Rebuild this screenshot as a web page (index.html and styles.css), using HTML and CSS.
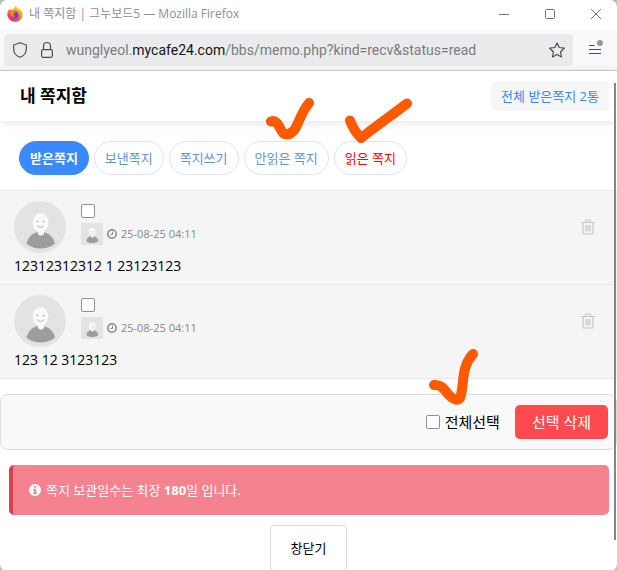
FILE: index.html
```html
<!DOCTYPE html>
<html lang="ko">
<head>
<meta charset="utf-8">
<meta name="viewport" content="width=device-width, initial-scale=1">
<title>내 쪽지함 | 그누보드5</title>
<link rel="stylesheet" href="styles.css">
</head>
<body>
<svg class="symbols" aria-hidden="true">
  <symbol id="person" viewBox="0 0 52 52">
    <rect width="52" height="52" fill="#e3e3e3"/>
    <path d="M12.500 42.500C15 34 20 31 26.500 31S38.500 34 41 42.500C37 46 32 47.500 26.500 47.500S16 46 12.500 42.500Z" fill="#9d9d9d"/>
    <path d="M24 29h6v4q-3 3-6 0Z" fill="#fafafa"/>
    <ellipse cx="26.500" cy="21.500" rx="7.800" ry="9.500" fill="#fafafa"/>
    <circle cx="23.500" cy="20.500" r=".8" fill="#999"/>
    <circle cx="29.500" cy="20.500" r=".8" fill="#999"/>
    <path d="M23 24.500q3.500 4 7 0" fill="none" stroke="#aaa"/>
  </symbol>
  <symbol id="clock" viewBox="0 0 10 10">
    <circle cx="5" cy="5" r="4.200" fill="none" stroke="currentColor" stroke-width="1.500"/>
    <path d="M5.500 2.500v3h-2" fill="none" stroke="currentColor"/>
  </symbol>
  <symbol id="trash" viewBox="0 0 14 16">
    <path d="M0 3.500h14M4 3.500L5 1h4l1 2.500M2 3.500v10.500q0 1 1 1h8q1 0 1-1V3.500M5 6v6.500M7 6v6.500M9 6v6.500" fill="none" stroke="currentColor" stroke-width="1.200"/>
  </symbol>
</svg>
<div class="window">
  <div class="titlebar">
    <svg class="firefox" viewBox="0 0 16 16" aria-hidden="true">
      <defs>
        <linearGradient id="flame" x1=".8" y1="0" x2=".25" y2="1">
          <stop offset="0" stop-color="#ffe226"/>
          <stop offset=".4" stop-color="#ff9a1f"/>
          <stop offset=".7" stop-color="#ff4b3e"/>
          <stop offset="1" stop-color="#e5218a"/>
        </linearGradient>
      </defs>
      <path d="M8.500 0C10 1 11 2.500 11.500 3.500L12.200 2.600C14.500 4.500 15.700 6.500 15.500 9C15 13 12 15.700 8 15.700S.5 12.500.4 8.500C.3 6.500 1 4.500 2 3.200L2.600 4.400L3.800 2.500L5 4C6.500 3.500 7.500 2 8.500 0Z" fill="url(#flame)"/>
      <circle cx="8" cy="8.800" r="3.600" fill="#7040d8"/>
      <path d="M3.500 6q2.500-1.500 5 .7L6.500 7.500Q6 9.500 8 10.500Q6 11.500 4.300 9.700Z" fill="#ff8a2a"/>
    </svg>
    <span class="window-title">내 쪽지함 | 그누보드5 — Mozilla Firefox</span>
    <div class="window-controls">
      <button type="button" aria-label="최소화"><svg viewBox="0 0 10 10"><path d="M0 5.500h10"/></svg></button>
      <button type="button" aria-label="최대화"><svg viewBox="0 0 10 10"><rect x=".5" y=".5" width="9" height="9" rx="1"/></svg></button>
      <button type="button" aria-label="닫기"><svg viewBox="0 0 10 10"><path d="M0 0l10 10M10 0L0 10"/></svg></button>
    </div>
  </div>
  <div class="toolbar">
    <div class="urlbar">
      <button type="button" aria-label="추적 방지"><svg viewBox="0 0 16 16"><path d="M8 .8L14.300 3V7C14.300 11 11.500 14 8 15.300C4.500 14 1.700 11 1.700 7V3Z"/></svg></button>
      <button type="button" aria-label="보안 연결"><svg viewBox="0 0 16 16"><rect x="2.600" y="7.600" width="10.800" height="7.700" rx="1.500"/><path d="M4.500 7.500V4a3.500 3.500 0 0 1 7 0v3.500"/></svg></button>
      <div class="url" role="textbox" aria-label="주소" tabindex="0">wunglyeol.<span class="domain">mycafe24.com</span>/bbs/memo.php?kind=recv&amp;status=read</div>
      <button type="button" aria-label="북마크"><svg viewBox="0 0 16 16"><path d="M8 .9L10.200 5.500L15.300 6.200L11.600 9.800L12.500 15L8 12.500L3.500 15L4.400 9.800L.7 6.200L5.800 5.500Z"/></svg></button>
    </div>
    <button class="menu" type="button" aria-label="메뉴"><svg viewBox="0 0 16 16"><path d="M2 3.500h5.500M2 7.500h12M2 11.500h12"/><circle cx="13" cy="1" r="3"/></svg></button>
  </div>
  <main class="page">
    <header class="page-head">
      <h1>내 쪽지함</h1>
      <span class="total">전체 받은쪽지 2통</span>
    </header>
    <nav class="tabs">
      <a class="tab current" href="#recv">받은쪽지</a>
      <a class="tab" href="#send">보낸쪽지</a>
      <a class="tab" href="#write">쪽지쓰기</a>
      <a class="tab" href="#unread">안읽은 쪽지<svg class="mark mark-unread" viewBox="0 0 48 44" aria-hidden="true"><path d="M5 25.500C12 23 14 34 17 37Q23 41 29 33C35 22 35 17 43 7"/></svg></a>
      <a class="tab selected" href="#read">읽은 쪽지<svg class="mark mark-read" viewBox="0 0 70 46" aria-hidden="true"><path d="M6 23.500C10 34 14 38 17 41C31 30 48 18 63 6.500"/></svg></a>
    </nav>
    <form class="memo-form">
      <ul class="memos">
        <li class="memo">
          <div class="memo-top">
            <svg class="avatar" role="img" aria-label="프로필"><use href="#person"/></svg>
            <div class="memo-info">
              <input type="checkbox" aria-label="쪽지 1 선택">
              <div class="memo-meta">
                <svg class="thumb" viewBox="0 0 52 52" aria-hidden="true"><use href="#person"/></svg>
                <svg class="clock" aria-hidden="true"><use href="#clock"/></svg>
                <time datetime="2025-08-25T04:11">25-08-25 04:11</time>
              </div>
            </div>
            <button class="delete" type="button" aria-label="삭제"><svg><use href="#trash"/></svg></button>
          </div>
          <a class="memo-text" href="#memo1">12312312312 1 23123123</a>
        </li>
        <li class="memo">
          <div class="memo-top">
            <svg class="avatar" role="img" aria-label="프로필"><use href="#person"/></svg>
            <div class="memo-info">
              <input type="checkbox" aria-label="쪽지 2 선택">
              <div class="memo-meta">
                <svg class="thumb" viewBox="0 0 52 52" aria-hidden="true"><use href="#person"/></svg>
                <svg class="clock" aria-hidden="true"><use href="#clock"/></svg>
                <time datetime="2025-08-25T04:11">25-08-25 04:11</time>
              </div>
            </div>
            <button class="delete" type="button" aria-label="삭제"><svg><use href="#trash"/></svg></button>
          </div>
          <a class="memo-text" href="#memo2">123 12 3123123</a>
        </li>
      </ul>
      <div class="actions">
        <div class="select-all">
          <input type="checkbox" id="all">
          <label for="all">전체선택</label>
          <svg class="mark mark-all" viewBox="0 0 50 58" aria-hidden="true"><path d="M5 38C14 37 16 45 22 50Q28 55 31 51C36 38 31 21 44 7"/></svg>
        </div>
        <button class="delete-selected" type="button">선택 삭제</button>
      </div>
    </form>
    <p class="notice">
      <svg viewBox="0 0 12 12" aria-hidden="true"><circle cx="6" cy="6" r="6" fill="#fff"/><path d="M5 2h2v1.800H5ZM4.200 4.800H7v3.700h1V10H4.200V8.500H5V6.200h-.8Z" fill="#f4838f"/></svg>
      <span>쪽지 보관일수는 최장 <strong>180</strong>일 입니다.</span>
    </p>
    <button class="close" type="button">창닫기</button>
    <div class="scroll-thumb"></div>
  </main>
</div>
</body>
</html>
```
FILE: styles.css
```css
* {
  box-sizing: border-box;
}

body {
  margin: 0;
  background: #bbb;
  color: #000;
  font: 13px/18px "Open Sans", "Noto Sans CJK KR", sans-serif;
}

button {
  margin: 0;
  padding: 0;
  border: 0;
  background: none;
  color: inherit;
  font: inherit;
}

a {
  color: inherit;
  text-decoration: none;
}

svg {
  display: block;
  flex: none;
}

.symbols {
  position: absolute;
  width: 0;
  height: 0;
}

.window {
  display: flex;
  flex-direction: column;
  min-height: 100vh;
  overflow: hidden;
  border-radius: 7px;
  background: #fff;
}

/* Browser frame */
.titlebar {
  display: flex;
  align-items: center;
  height: 30px;
  padding: 0 16px 2px 7px;
  color: #8f8f8f;
}

.firefox {
  width: 16px;
  height: 16px;
  margin-right: 6px;
}

.window-title {
  flex: 1;
  font-size: 12px;
}

.window-controls {
  display: flex;
  gap: 36px;
}

.window-controls svg {
  width: 10px;
  height: 10px;
  overflow: visible;
  fill: none;
  stroke: #777;
}

.toolbar {
  display: flex;
  align-items: center;
  gap: 14px;
  height: 41px;
  padding: 0 14px 0 4px;
  border-bottom: 1px solid #ccc;
  background: #f9f9fb;
}

.urlbar {
  display: flex;
  flex: 1;
  align-items: center;
  gap: 11px;
  height: 32px;
  padding: 0 8px;
  border-radius: 4px;
  background: #ebebed;
}

.toolbar svg {
  width: 16px;
  height: 16px;
  overflow: visible;
  fill: none;
  stroke: #4d4d54;
  stroke-width: 1.2;
  stroke-linejoin: round;
}

.url {
  flex: 1;
  overflow: hidden;
  color: #7b7b80;
  font-family: Roboto, sans-serif;
  font-size: 14px;
  line-height: 24px;
  white-space: nowrap;
}

.domain {
  color: #15141a;
}

.toolbar .menu circle {
  fill: #999;
  stroke: none;
}

/* Page */
.page {
  position: relative;
  display: flex;
  flex: 1;
  flex-direction: column;
}

.page-head {
  display: flex;
  align-items: center;
  justify-content: space-between;
  height: 50px;
  padding: 0 8px 0 20px;
  box-shadow: 0 1px 10px rgba(0, 0, 0, .12);
}

h1 {
  margin: 0;
  font-size: 17px;
  line-height: 24px;
}

.total {
  padding: 6px 10px;
  border-radius: 5px;
  background: #f6f6f6;
  color: #3a8afd;
}

.tabs {
  display: flex;
  gap: 5px;
  padding: 20px 19px 15px;
}

.tab {
  position: relative;
  padding: 7px 10px;
  border: 1px solid #d6e6fc;
  border-radius: 17px;
  background: #fff;
  color: #6594d6;
  white-space: nowrap;
}

.tab.current {
  border-color: #3a8afd;
  background: #3a8afd;
  color: #fff;
  font-weight: bold;
}

.tab.selected {
  color: #f00;
}

input[type="checkbox"] {
  appearance: none;
  flex: none;
  width: 14px;
  height: 14px;
  margin: 0;
  border: 1px solid #8f8f9d;
  border-radius: 2px;
  background: #fff;
}

.memos {
  margin: 0;
  padding: 0;
  border-top: 1px solid #e9e9e9;
  list-style: none;
}

.memo {
  padding: 10px 22px 9px 14px;
  border-bottom: 1px solid #e9e9e9;
  background: #f5f5f5;
}

.memo-top {
  display: flex;
  align-items: center;
  gap: 15px;
}

.avatar {
  width: 52px;
  height: 52px;
  border-radius: 50%;
}

.memo-info {
  display: flex;
  flex: 1;
  flex-direction: column;
  gap: 5px;
  padding-bottom: 6px;
}

.memo-meta {
  display: flex;
  align-items: center;
  gap: 4px;
  color: #888;
  font-size: 11px;
}

.thumb {
  width: 22px;
  height: 22px;
}

.clock {
  width: 10px;
  height: 10px;
}

.delete {
  color: #c4c8d0;
}

.delete svg {
  width: 14px;
  height: 16px;
}

.memo-text {
  display: block;
  margin-top: 3px;
  font-size: 14px;
  line-height: 19px;
}

.actions {
  display: flex;
  align-items: center;
  justify-content: flex-end;
  gap: 15px;
  margin-top: 15px;
  padding: 10px 8px;
  border: 1px solid #ddd;
  border-radius: 8px;
  background: #f9f9f9;
  font-size: 15px;
}

.select-all {
  position: relative;
  display: flex;
  align-items: center;
  gap: 5px;
}

.delete-selected {
  padding: 8px 17px;
  border-radius: 5px;
  background: #ff4b50;
  color: #fff;
}

.notice {
  display: flex;
  align-items: center;
  gap: 5px;
  margin: 15px 8px 10px 9px;
  padding: 16px;
  border-left: 4px solid #dc3f50;
  border-radius: 5px;
  background: #f4838f;
  color: #fff;
}

.notice svg {
  width: 12px;
  height: 12px;
}

.close {
  align-self: center;
  padding: 13px 20px;
  border: 1px solid #dcdcdc;
  border-radius: 3px;
}

.scroll-thumb {
  position: absolute;
  top: 12px;
  right: 1px;
  bottom: 31px;
  width: 2px;
  background: #858585;
}

/* Hand-drawn check marks over the controls */
.mark {
  position: absolute;
  z-index: 1;
  fill: none;
  stroke: #ff5a00;
  stroke-width: 10;
  stroke-linecap: round;
  stroke-linejoin: round;
  pointer-events: none;
}

.mark-unread {
  top: -46px;
  left: 21px;
  width: 48px;
  height: 44px;
}

.mark-read {
  top: -45px;
  left: 9px;
  width: 70px;
  height: 46px;
}

.mark-all {
  bottom: 26px;
  left: 3px;
  width: 50px;
  height: 58px;
}
```
